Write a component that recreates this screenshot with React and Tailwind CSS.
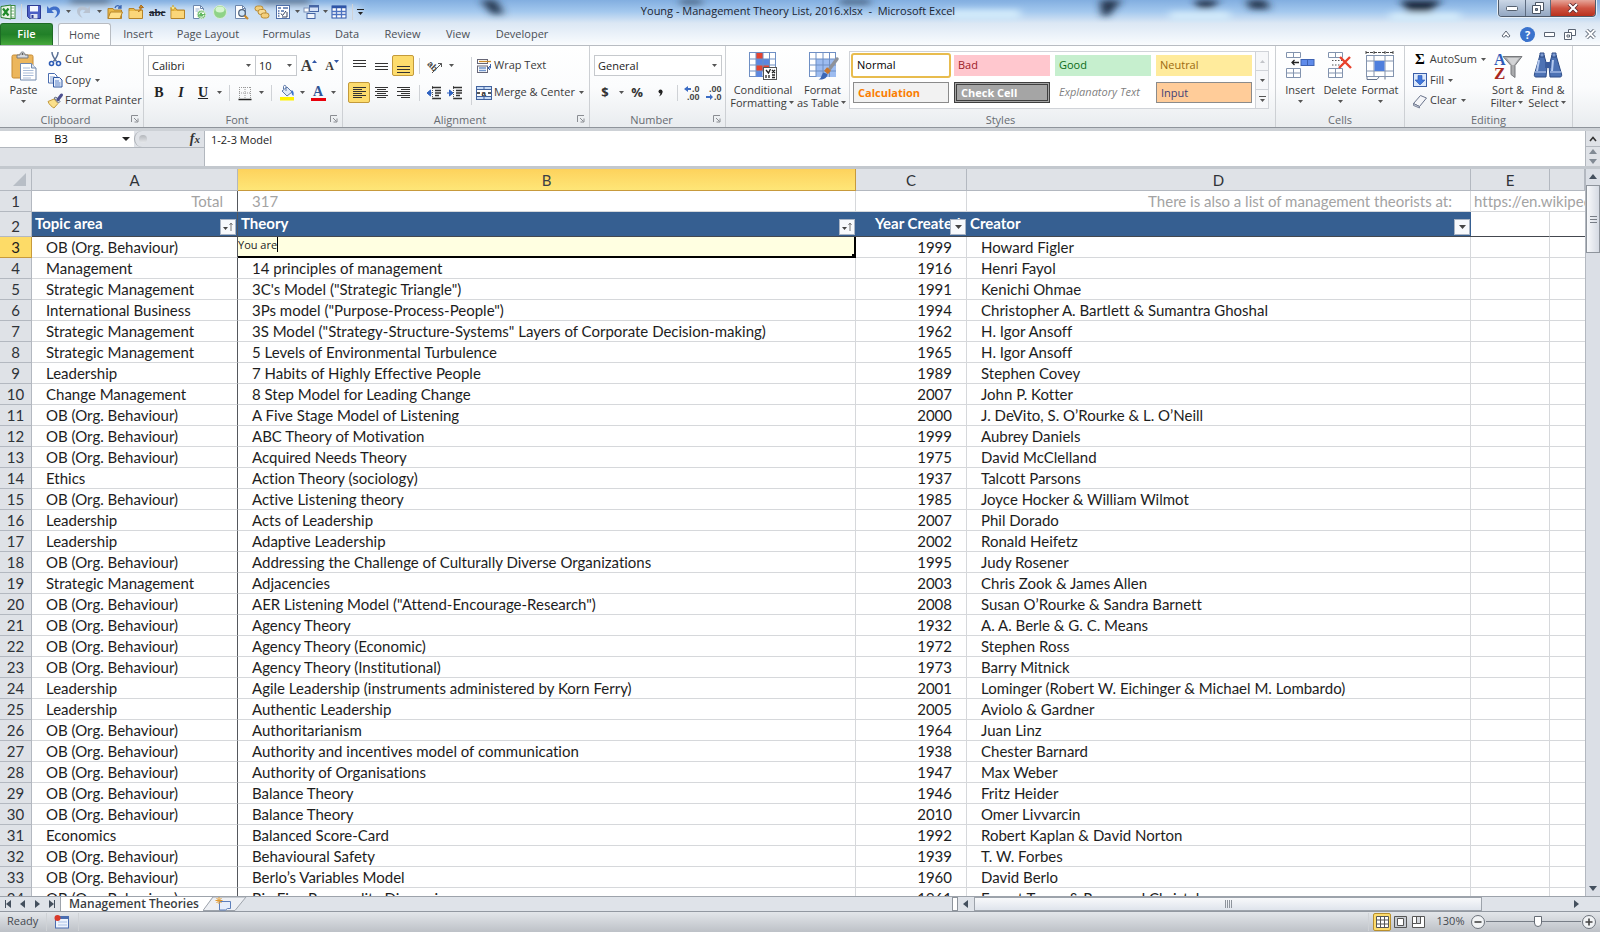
import { useState } from 'react';

const ROWS = [
  ['OB (Org. Behaviour)', '', '1999', 'Howard Figler'],
  ['Management', '14 principles of management', '1916', 'Henri Fayol'],
  ['Strategic Management', '3C\'s Model ("Strategic Triangle")', '1991', 'Kenichi Ohmae'],
  ['International Business', '3Ps model ("Purpose-Process-People")', '1994', 'Christopher A. Bartlett & Sumantra Ghoshal'],
  ['Strategic Management', '3S Model ("Strategy-Structure-Systems" Layers of Corporate Decision-making)', '1962', 'H. Igor Ansoff'],
  ['Strategic Management', '5 Levels of Environmental Turbulence', '1965', 'H. Igor Ansoff'],
  ['Leadership', '7 Habits of Highly Effective People', '1989', 'Stephen Covey'],
  ['Change Management', '8 Step Model for Leading Change', '2007', 'John P. Kotter'],
  ['OB (Org. Behaviour)', 'A Five Stage Model of Listening', '2000', 'J. DeVito, S. O’Rourke & L. O’Neill'],
  ['OB (Org. Behaviour)', 'ABC Theory of Motivation', '1999', 'Aubrey Daniels'],
  ['OB (Org. Behaviour)', 'Acquired Needs Theory', '1975', 'David McClelland'],
  ['Ethics', 'Action Theory (sociology)', '1937', 'Talcott Parsons'],
  ['OB (Org. Behaviour)', 'Active Listening theory', '1985', 'Joyce Hocker & William Wilmot'],
  ['Leadership', 'Acts of Leadership', '2007', 'Phil Dorado'],
  ['Leadership', 'Adaptive Leadership', '2002', 'Ronald Heifetz'],
  ['OB (Org. Behaviour)', 'Addressing the Challenge of Culturally Diverse Organizations', '1995', 'Judy Rosener'],
  ['Strategic Management', 'Adjacencies', '2003', 'Chris Zook & James Allen'],
  ['OB (Org. Behaviour)', 'AER Listening Model ("Attend-Encourage-Research")', '2008', 'Susan O’Rourke & Sandra Barnett'],
  ['OB (Org. Behaviour)', 'Agency Theory', '1932', 'A. A. Berle & G. C. Means'],
  ['OB (Org. Behaviour)', 'Agency Theory (Economic)', '1972', 'Stephen Ross'],
  ['OB (Org. Behaviour)', 'Agency Theory (Institutional)', '1973', 'Barry Mitnick'],
  ['Leadership', 'Agile Leadership (instruments administered by Korn Ferry)', '2001', 'Lominger (Robert W. Eichinger & Michael M. Lombardo)'],
  ['Leadership', 'Authentic Leadership', '2005', 'Aviolo & Gardner'],
  ['OB (Org. Behaviour)', 'Authoritarianism', '1964', 'Juan Linz'],
  ['OB (Org. Behaviour)', 'Authority and incentives model of communication', '1938', 'Chester Barnard'],
  ['OB (Org. Behaviour)', 'Authority of Organisations', '1947', 'Max Weber'],
  ['OB (Org. Behaviour)', 'Balance Theory', '1946', 'Fritz Heider'],
  ['OB (Org. Behaviour)', 'Balance Theory', '2010', 'Omer Livvarcin'],
  ['Economics', 'Balanced Score-Card', '1992', 'Robert Kaplan & David Norton'],
  ['OB (Org. Behaviour)', 'Behavioural Safety', '1939', 'T. W. Forbes'],
  ['OB (Org. Behaviour)', 'Berlo’s Variables Model', '1960', 'David Berlo'],
  ['OB (Org. Behaviour)', 'Big Five Personality Dimensions', '1961', 'Ernest Tupes & Raymond Christal'],
];

function Caret({ className = 'w-[10px]' }) {
  return (
    <span className={`flex shrink-0 items-center justify-center ${className}`}>
      <svg width="5" height="3" viewBox="0 0 5 3"><path d="M0 0h5L2.5 3z" fill="#555" /></svg>
    </span>
  );
}

function Sep({ className = 'h-4' }) {
  return (
    <span className="flex w-[10px] shrink-0 justify-center">
      <span className={`w-px bg-[#cfd2d6] ${className}`} />
    </span>
  );
}

function Svg({ size = 16, box = 16, children }) {
  return (
    <svg width={size} height={size} viewBox={`0 0 ${box} ${box}`} fill="none" className="shrink-0 overflow-visible">
      {children}
    </svg>
  );
}

/* ---------- quick access icons ---------- */

const ExcelIcon = () => (
  <Svg>
    <rect x="6" y="1.5" width="9" height="13" fill="#fff" stroke="#3b8a3f" />
    <path d="M10 4h4M10 7h4M10 10h4M10 13h4" stroke="#79b67a" />
    <path d="M1 2.5 11 1v14L1 13.5z" fill="#e8f4e6" stroke="#2d7d32" />
    <path d="m3 4.5 5.5 7M8.5 4.5 3 11.5" stroke="#1f8a2a" strokeWidth="2.2" />
  </Svg>
);

const SaveIcon = () => (
  <Svg>
    <path d="M1.5 1.5h13v13h-11l-2-2z" fill="#4c5fc4" stroke="#2c3a94" />
    <rect x="4" y="2" width="8" height="5.5" fill="#f4f7ff" />
    <rect x="4.5" y="10" width="7" height="4.5" fill="#dfe4f2" />
    <rect x="5.5" y="11" width="2" height="3" fill="#2c3a94" />
  </Svg>
);

const UndoIcon = ({ color = '#3f6fc9' }) => (
  <Svg>
    <path d="M1 2v7h7L5.6 6.6C8 4.8 11 5.6 11 8.5c0 2-1 3.6-2.6 5.5 3.6-1.7 5.6-4 5.6-6.8C14 2.6 8 .6 3.4 4.4z" fill={color} />
  </Svg>
);

const FolderIcon = ({ open, arrow, star }) => (
  <Svg>
    <path d="M1 4.5h5l1 1.5h7.5v8.5H1z" fill="#e9b949" stroke="#b5842a" />
    {open ? (
      <path d="M3.5 8h12l-2.5 6.5H1z" fill="#ffe08a" stroke="#b5842a" />
    ) : (
      <path d="M1.5 7h12.5v7H1.5z" fill="#fbd679" />
    )}
    {open && <path d="M8 4c1-3 4-3 5.5-.5M14 1v3h-3" stroke="#3a66b4" strokeWidth="1.3" />}
    {arrow && <path d="M10 7.5c3-.5 3.5-3 3-5M11 4l2-3 2.5 2.5z" stroke="#a86a19" fill="#e39a2e" />}
    {star && <path d="m3 1 .8 2.2L6 4l-2.200.8L3 7l-.8-2.2L0 4l2.200-.8z" fill="#fff3a0" stroke="#c99b1d" strokeWidth=".6" />}
  </Svg>
);

const PageIcon = ({ lens }) => (
  <Svg>
    <path d="M2.5 1.5h7l3 3v10h-10z" fill="#fff" stroke="#6d87ad" />
    <path d="M9.5 1.5v3h3" stroke="#6d87ad" />
    {lens ? (
      <>
        <circle cx="9" cy="9" r="3.3" fill="#cfe4f7" stroke="#4d5f78" strokeWidth="1.2" />
        <path d="m11.5 11.5 3.5 3.5" stroke="#c88a2b" strokeWidth="2.2" />
      </>
    ) : (
      <>
        <path d="M4.5 5h4M4.5 7h3" stroke="#9db2d0" />
        <circle cx="10.5" cy="10.5" r="4.3" fill="#63b862" stroke="#d9efd8" />
        <path d="M8 10.5a2.5 2.5 0 0 1 4.5-1.5M13 7.5v2h-2M13 11a2.5 2.5 0 0 1-4.5 1.2" stroke="#fff" />
      </>
    )}
  </Svg>
);

const GreenIcon = () => (
  <Svg>
    <circle cx="8" cy="8" r="6.5" fill="#8fd388" stroke="#d8ecd6" />
    <ellipse cx="8" cy="5.5" rx="4.5" ry="3" fill="#d6f5d0" />
  </Svg>
);

const ShapesIcon = () => (
  <Svg>
    <rect x="1" y="2" width="8" height="5" rx="2.5" fill="#f3cf7c" stroke="#b98b33" />
    <rect x="4" y="5.5" width="8" height="5" rx="2.5" fill="#f7dc97" stroke="#b98b33" />
    <rect x="7" y="9" width="8" height="5" rx="2.5" fill="#f3cf7c" stroke="#b98b33" />
  </Svg>
);

const FormIcon = () => (
  <Svg>
    <rect x="1.5" y="1.5" width="13" height="13" fill="#fff" stroke="#4f6fa8" />
    <path d="M3 4h3M8 4h5M3 7h1.5M6 7h3M3 12h1.5M3 9.5h1.5" stroke="#4f6fa8" strokeWidth="1.3" />
    <path d="m6 9.5 1.5 2L11 7M12 8v5H7" stroke="#333f5c" />
  </Svg>
);

const ArrangeIcon = () => (
  <Svg>
    <rect x="6.5" y="1.5" width="9" height="6" fill="#d5e2f7" stroke="#4666a5" />
    <path d="M7 2.5h8" stroke="#4666a5" strokeWidth="2" />
    <rect x="1" y="4" width="5" height="4" fill="#fff" stroke="#7a8fb5" />
    <rect x="4" y="9.5" width="8" height="5" fill="#eef3fb" stroke="#4666a5" />
  </Svg>
);

const GridIcon = () => (
  <Svg>
    <rect x="1" y="2" width="14" height="12" fill="#fff" stroke="#2f55a6" />
    <path d="M1 3h14" stroke="#2f55a6" strokeWidth="2.5" />
    <path d="M1 7.5h14M1 10.5h14M5.5 4v10M10.5 4v10" stroke="#4d72c0" strokeWidth="1.3" />
  </Svg>
);

/* ---------- ribbon icons ---------- */

const PasteIcon = () => (
  <svg width="28" height="30" viewBox="0 0 28 30" fill="none">
    <rect x="2" y="4" width="21" height="23" rx="1.5" fill="#ecb65c" stroke="#c68a33" />
    <path d="M7 7V4h3c0-4 5-4 5 0h3v3z" fill="#d6d9de" stroke="#74787f" />
    <circle cx="12.5" cy="3" r="1" fill="#555" />
    <path d="M10.5 12.5h11l4.5 4.5v12H10.5z" fill="#fff" stroke="#7089ad" />
    <path d="M21.5 12.5V17H26" fill="#dbe4f2" stroke="#7089ad" />
    <path d="M13 17h7M13 19.5h10.5M13 22h10.5M13 24.5h10.5M13 27h8" stroke="#a9bcd8" />
  </svg>
);

const CutIcon = () => (
  <Svg>
    <path d="M5 1c0 4 2 6 4.5 9.5M11 1c0 4-2 6-4.5 9.5" stroke="#5b7196" strokeWidth="1.5" />
    <circle cx="4.5" cy="12.5" r="2" stroke="#2c5bb5" strokeWidth="1.6" />
    <circle cx="11.5" cy="12.5" r="2" stroke="#2c5bb5" strokeWidth="1.6" />
  </Svg>
);

const CopyIcon = () => (
  <Svg>
    <path d="M1.5 1.5h6l2.5 2.5v7H1.5z" fill="#fff" stroke="#4a6db0" />
    <path d="M3 5h5M3 7h5M3 9h3" stroke="#7c9bd0" />
    <path d="M6.5 5.5h6L15 8v7H6.5z" fill="#eaf1fc" stroke="#2d55a0" />
    <path d="M8 9h4M8 11h5.5M8 13h5.5" stroke="#5c82c6" />
  </Svg>
);

const PainterIcon = () => (
  <Svg>
    <path d="M1 8.5 7 6l4 4.5L7 15c-2-1-5-3.5-6-6.5z" fill="#fbe08c" stroke="#c29a3f" />
    <path d="m7 5 4.5 5 1.5-1.5L9 4z" fill="#cfd6e0" stroke="#6c7688" />
    <path d="M11 6.5 14.5 2" stroke="#4b4f8e" strokeWidth="3" strokeLinecap="round" />
  </Svg>
);

const Lines = ({ rows, from = 2.5, step = 2 }) => (
  <Svg>
    {rows.map(([x, w], i) => (
      <path key={i} d={`M${x} ${from + i * step}h${w}`} stroke="#333" />
    ))}
  </Svg>
);

const BordersIcon = () => (
  <Svg>
    <path d="M2.5 2v11M8 2v11M13.5 2v11M2 2.5h12M2 8h12" stroke="#999" strokeDasharray="1 1" />
    <path d="M1.5 14.5h13" stroke="#222" strokeWidth="1.5" />
  </Svg>
);

const FillColorIcon = () => (
  <Svg>
    <path d="m3 6 5-4 5 5-5 4z" fill="#dfe9f8" stroke="#5c78a8" />
    <path d="M7 6V1.5c0-1.5-2.5-1.5-2.5 0V4" stroke="#5c78a8" />
    <path d="M12.5 5c2 .5 2.5 3 2 6-1.5-1-2-2-2-4z" fill="#3b73cf" />
    <rect x="1" y="12" width="14" height="3.5" fill="#fff200" />
  </Svg>
);

const OrientIcon = () => (
  <Svg>
    <text x="0" y="10" transform="rotate(45 4 8)" fontSize="9" fontWeight="700" fontFamily="Liberation Sans, sans-serif" fill="#444">ab</text>
    <path d="M5 15 14.5 5.500M14.500 5.500h-3.500M14.500 5.500v3.500" stroke="#555" />
  </Svg>
);

const IndentIcon = ({ out }) => (
  <Svg>
    <path d="M6 2.5h9M9 5.5h6M9 8h6M9 10.5h4M6 13.5h9" stroke="#333" strokeWidth="1.3" />
    <path d="M6.5 1v14" stroke="#555" strokeDasharray="1 1" />
    <path d={out ? 'M6 8H2M4.5 5 1 8l3.5 3z' : 'M0 8h4M2.5 5 6 8l-3.5 3z'} stroke="#2f62c0" fill="#2f62c0" />
  </Svg>
);

const WrapIcon = () => (
  <Svg>
    <rect x="1.5" y="1.5" width="10" height="4" fill="#fff" stroke="#667" />
    <path d="M3 3.5h12" stroke="#c98a2b" strokeWidth="1.3" />
    <rect x="1.5" y="8" width="10" height="6.5" fill="#fff" stroke="#667" />
    <path d="M3 10h7M3 12.5h7" stroke="#6f95cc" strokeWidth="1.4" />
    <path d="M14.5 6v4H13M14 8l-2 2 2 2" stroke="#3862ac" />
  </Svg>
);

const MergeIcon = () => (
  <Svg>
    <rect x=".5" y="1.5" width="15" height="13" fill="#c9dcf6" stroke="#42639e" />
    <path d="M0 4.5h16M0 11.5h16M8 1v3.5M8 11.5V15" stroke="#42639e" />
    <rect x="1" y="5" width="14" height="6" fill="#fff" />
    <text x="5.5" y="10.5" fontSize="8" fontWeight="700" fontFamily="Liberation Sans, sans-serif" fill="#222">a</text>
    <path d="M1 8h3M12 8h3" stroke="#222" strokeWidth="1.5" />
  </Svg>
);

const DecimalIcon = ({ more }) => (
  <svg width="18" height="16" viewBox="0 0 18 16" fontSize="9" fontWeight="700" fontFamily="Liberation Sans, sans-serif" className="overflow-visible">
    <text x={more ? 8 : 3} y="7" fill="#444">{more ? '.0' : '.00'}</text>
    <text x={more ? 3 : 8} y="15" fill="#444">{more ? '.00' : '.0'}</text>
    {more ? <path d="M0 4 4 1v2h3v2H4v2z" fill="#3b6cc4" /> : <path d="M7 12 4 9v2H0v2h4v2z" fill="#3b6cc4" />}
  </svg>
);

const CondFormatIcon = () => (
  <Svg size={30} box={30}>
    <rect x="1.5" y="1.5" width="26" height="24" fill="#fff" stroke="#6f8fc4" />
    <path d="M8 2h7v6H8zM8 14h13v6H8z" fill="#e5432f" />
    <path d="M8 8h13v6H8z" fill="#5b86e0" />
    <path d="M8 20h6v6H8z" fill="#5b86e0" />
    <path d="M1 8h27M1 14h27M1 20h27M8 1v25M15 1v25M21.5 1v25" stroke="#6f8fc4" />
    <rect x="15.5" y="16.5" width="13" height="12" fill="#fff" stroke="#555" />
    <path d="m18 19 2.5 3 2-4M18 24v3M21 24v3M24 19l3 3M27 19l-3 3M24 24h3M24 26.5h3" stroke="#222" strokeWidth="1.3" />
  </Svg>
);

const FormatTableIcon = () => (
  <Svg size={30} box={30}>
    <rect x="1.5" y="1.5" width="26" height="24" fill="#fff" stroke="#6f8fc4" />
    <path d="M8 8h20v18H8z" fill="#9dbcf0" />
    <path d="M1 8h27M1 14h27M1 20h27M8 1v25M15 1v25M21.5 1v25" stroke="#6f8fc4" />
    <path d="M29 8 20 20" stroke="#8f9299" strokeWidth="3.5" strokeLinecap="round" />
    <path d="m21 18-3 3.5" stroke="#c9762c" strokeWidth="5" />
    <path d="M19.5 23c0 4-4 6-9 5.5 3-1 2.5-4 5-7z" fill="#3c67b5" />
  </Svg>
);

const InsertIcon = () => (
  <Svg size={30} box={30}>
    <path d="M1.5 1.5h14v5h-14zM8.5 1.5v5M1.5 17.5h14v9h-14zM8.5 17.5v9M1.5 22h14" fill="#fff" stroke="#8293ae" />
    <rect x="16" y="8.5" width="13" height="6" fill="#5f8bea" stroke="#3e62b2" />
    <path d="M22.5 8.5v6" stroke="#3e62b2" />
    <path d="M14 11.5H7M9.5 9 7 11.5 9.5 14" stroke="#222" strokeWidth="1.3" />
  </Svg>
);

const DeleteIcon = () => (
  <Svg size={30} box={30}>
    <path d="M3.5 1.5h14v5h-14zM10.5 1.5v5M3.5 17.5h14v9h-14zM10.5 17.5v9M3.5 22h14" fill="#fff" stroke="#8293ae" />
    <path d="M7 9.5h10M7 14h10" stroke="#555" strokeDasharray="1.5 1.5" />
    <path d="m15 6 11 11M25 6 14 17" stroke="#e8412c" strokeWidth="2.4" />
  </Svg>
);

const FormatIcon = () => (
  <Svg size={30} box={30}>
    <path d="M1 1.5h27M1 0v3M9 0v3M20 0v3M28 0v3" stroke="#444" strokeDasharray="3 1" />
    <rect x="1.5" y="4.5" width="27" height="21" fill="#fff" stroke="#8293ae" />
    <path d="M1 10h28M1 20h28M9 4v22M20 4v22" stroke="#8293ae" />
    <rect x="9.5" y="10" width="10" height="10" fill="#4f7fdd" />
    <path d="M2 26v2.5h10l2-2.5M20 26v2.5" stroke="#66758f" />
  </Svg>
);

const FillIcon = () => (
  <Svg>
    <rect x="1.5" y="1.5" width="13" height="13" fill="#dbe8fb" stroke="#3a5ea8" />
    <path d="M6 3.5h4V8h3l-5 5-5-5h3z" fill="#3f76dc" stroke="#2b55ad" strokeWidth=".6" />
  </Svg>
);

const ClearIcon = () => (
  <Svg>
    <path d="m1.5 10.5 7-8 6 2.5-7 8.5z" fill="#f4f5f8" stroke="#68728a" />
    <path d="m1.5 10.5 6 3v1.5l-6-2.5z" fill="#c5cbd8" stroke="#68728a" strokeWidth=".8" />
  </Svg>
);

const SortIcon = () => (
  <Svg size={30} box={30}>
    <path d="M10 5.5h19l-7 9v12l-4-3v-9z" fill="#aaabad" stroke="#77797c" />
    <path d="M14 7h12l-5 7h-2z" fill="#d3d4d6" />
    <text x="1" y="14" fontSize="16" fontWeight="700" fontFamily="Liberation Serif, serif" fill="#2f5cb8">A</text>
    <text x="1" y="28" fontSize="17" fontWeight="700" fontFamily="Liberation Serif, serif" fill="#a8281f">Z</text>
  </Svg>
);

const FindIcon = () => (
  <Svg size={30} box={30}>
    <path d="M7 4h4l3 11-1 11H3c-1.5 0-2-1-1.5-3zM23 4h-4l-3 11 1 11h10c1.5 0 2-1 1.5-3z" fill="#4d72b4" stroke="#2c4b86" />
    <path d="M12 11h6v6h-6z" fill="#3a5c9d" />
    <path d="M7 2h4v4H7zM19 2h4v4h-4z" fill="#7d9bd2" stroke="#2c4b86" />
    <path d="M6 9 4 20M20 9l-1 11" stroke="#b3c8ee" strokeWidth="2" />
    <path d="M2 21h11M17 21h11" stroke="#9fb7e4" strokeWidth="1.5" />
  </Svg>
);

/* ---------- ribbon pieces ---------- */

function Group({ label, width, launcher, children }) {
  return (
    <section aria-label={label} className={`flex shrink-0 flex-col border-r border-[#cdd0d4] ${width}`}>
      <div className="flex h-16 flex-1 pt-[3px]">{children}</div>
      <div className="flex h-4 items-center text-[11px] leading-none text-[#676b71]">
        <span className="flex-1 text-center">{label}</span>
        {launcher && (
          <button aria-label={`${label} settings`} className="mr-1 shrink-0">
            <svg width="8" height="8" viewBox="0 0 8 8" fill="none">
              <path d="M.5 7V.5H7M3 3l3.5 3.5M7 3.5V7H3.5" stroke="#8a8d92" />
            </svg>
          </button>
        )}
      </div>
    </section>
  );
}

function Tool({ label, active, width = 'w-[22px]', children }) {
  return (
    <button
      aria-label={label}
      className={`flex h-[21px] shrink-0 items-center justify-center rounded-[2px] border ${width} ${
        active ? 'border-[#c39a3b] bg-[#fddc6d]' : 'border-transparent'
      }`}
    >
      {children}
    </button>
  );
}

function BigButton({ icon, lines, caret, width }) {
  return (
    <button className={`flex shrink-0 flex-col items-center text-[11px] leading-[13px] ${width}`}>
      <span className="flex h-[34px] items-center">{icon}</span>
      {lines.map((line, i) => (
        <span key={line} className="flex items-center whitespace-nowrap">
          {line}
          {!caret && i === lines.length - 1 && <Caret className="w-[9px]" />}
        </span>
      ))}
      {caret && <Caret className="h-[11px] w-[9px]" />}
    </button>
  );
}

function SmallButton({ icon, label, caret }) {
  return (
    <button className="flex h-[21px] items-center gap-[2px] whitespace-nowrap">
      {icon}
      <span>{label}</span>
      {caret && <Caret className="w-[9px]" />}
    </button>
  );
}

function Combo({ label, options, width }) {
  return (
    <label className={`flex h-[21px] items-center border border-[#c6c9cd] bg-white ${width}`}>
      <span className="sr-only">{label}</span>
      <select className="h-full min-w-0 flex-1 appearance-none bg-transparent pl-[3px] leading-[19px] text-[#222] outline-none">
        {options.map((o) => <option key={o}>{o}</option>)}
      </select>
      <Caret className="w-[13px]" />
    </label>
  );
}

function StyleCell({ name, className }) {
  return <button className={`h-[21px] px-1 text-left whitespace-nowrap ${className}`}>{name}</button>;
}

function Ribbon() {
  return (
    <div className="flex h-[83px] shrink-0 overflow-hidden border-t border-b border-t-[#b8bcc2] border-b-[#8f949b] bg-linear-to-b from-white via-[#fbfcfd] to-[#e9ecef] text-[11px] text-[#3b3b3b]">
      <Group label="Clipboard" width="w-[144px]" launcher>
        <BigButton icon={<PasteIcon />} lines={['Paste']} caret width="w-[47px]" />
        <div className="flex flex-col">
          <SmallButton icon={<CutIcon />} label="Cut" />
          <SmallButton icon={<CopyIcon />} label="Copy" caret />
          <SmallButton icon={<PainterIcon />} label="Format Painter" />
        </div>
      </Group>

      <Group label="Font" width="w-[199px]" launcher>
        <div className="flex flex-col gap-[6px] pt-[6px] pl-1">
          <div className="flex items-center">
            <Combo label="Font name" options={['Calibri', 'Arial']} width="w-[108px]" />
            <Combo label="Font size" options={['10', '11', '12']} width="-ml-px w-[42px]" />
            <Tool label="Increase font size" width="w-[24px]">
              <span className="font-[Liberation_Serif,serif] text-[16px] font-bold">A</span>
              <svg width="5" height="12" viewBox="0 0 5 12"><path d="M0 3h5L2.5 0z" fill="#2f55a6" /></svg>
            </Tool>
            <Tool label="Decrease font size">
              <span className="font-[Liberation_Serif,serif] text-[12px] font-bold">A</span>
              <svg width="5" height="12" viewBox="0 0 5 12"><path d="M0 0h5L2.5 3z" fill="#2f55a6" /></svg>
            </Tool>
          </div>
          <div className="flex items-center font-[Liberation_Serif,serif] text-[14px] font-bold text-[#222]">
            <Tool label="Bold">B</Tool>
            <Tool label="Italic"><i>I</i></Tool>
            <Tool label="Underline"><u>U</u></Tool>
            <Caret />
            <Sep />
            <Tool label="Borders"><BordersIcon /></Tool>
            <Caret />
            <Sep />
            <Tool label="Fill colour"><FillColorIcon /></Tool>
            <Caret className="w-[9px]" />
            <Tool label="Font colour">
              <span className="flex flex-col items-center">
                <span className="text-[14px] leading-[13px] text-[#2f5597]">A</span>
                <span className="h-[3px] w-[15px] bg-[#e8000b]" />
              </span>
            </Tool>
            <Caret className="w-[9px]" />
          </div>
        </div>
      </Group>

      <Group label="Alignment" width="w-[247px]" launcher>
        <div className="flex flex-col gap-[6px] pt-[6px] pl-[5px]">
          <div className="flex items-center">
            <Tool label="Top align"><Lines from={2.5} step={3} rows={[[2, 13], [2, 13], [2, 13]]} /></Tool>
            <Tool label="Middle align"><Lines from={5.5} step={3} rows={[[2, 13], [2, 13], [2, 13]]} /></Tool>
            <Tool label="Bottom align" active><Lines from={8.5} step={3} rows={[[2, 13], [2, 13], [2, 13]]} /></Tool>
            <Sep />
            <Tool label="Orientation"><OrientIcon /></Tool>
            <Caret />
          </div>
          <div className="flex items-center">
            <Tool label="Align left" active><Lines rows={[[2, 13], [2, 9], [2, 13], [2, 9], [2, 13], [2, 9]]} /></Tool>
            <Tool label="Center"><Lines rows={[[2, 13], [4, 9], [2, 13], [4, 9], [2, 13], [4, 9]]} /></Tool>
            <Tool label="Align right"><Lines rows={[[2, 13], [6, 9], [2, 13], [6, 9], [2, 13], [6, 9]]} /></Tool>
            <Sep />
            <Tool label="Decrease indent" width="w-5"><IndentIcon out /></Tool>
            <Tool label="Increase indent"><IndentIcon /></Tool>
          </div>
        </div>
        <Sep className="mt-2 h-12" />
        <div className="flex flex-col gap-[6px] pt-[6px]">
          <SmallButton icon={<WrapIcon />} label="Wrap Text" />
          <SmallButton icon={<MergeIcon />} label="Merge & Center" caret />
        </div>
      </Group>

      <Group label="Number" width="w-[136px]" launcher>
        <div className="flex flex-col gap-[6px] pt-[6px] pl-1">
          <Combo label="Number format" options={['General', 'Number', 'Percentage']} width="w-[128px]" />
          <div className="flex items-center text-[13px] font-bold text-[#333]">
            <Tool label="Accounting format">$</Tool>
            <Caret />
            <Tool label="Percent style">%</Tool>
            <Tool label="Comma style" width="w-[24px]">
              <svg width="5" height="8" viewBox="0 0 5 8"><circle cx="2.5" cy="2.5" r="2" fill="#222" /><path d="M4.500 2.500c0 2-1 4-3.500 5 1-1.500 1.500-2.500 1.500-4z" fill="#222" /></svg>
            </Tool>
            <Sep />
            <Tool label="Increase decimal"><DecimalIcon more /></Tool>
            <Tool label="Decrease decimal"><DecimalIcon /></Tool>
          </div>
        </div>
      </Group>

      <Group label="Styles" width="w-[550px]">
        <BigButton icon={<CondFormatIcon />} lines={['Conditional', 'Formatting']} width="w-[74px]" />
        <BigButton icon={<FormatTableIcon />} lines={['Format', 'as Table']} width="w-[45px]" />
        <div className="mt-[2px] ml-1 flex h-[58px] border border-[#d0d3d8] bg-white">
          <div className="grid grid-cols-[96px_96px_96px_96px] content-start gap-x-[5px] gap-y-[6px] px-[3px] pt-[3px]">
            <StyleCell name="Normal" className="rounded-[1px] bg-white text-black outline-2 outline-[#e8bc4e]" />
            <StyleCell name="Bad" className="bg-[#ffc7ce] text-[#9c1c28]" />
            <StyleCell name="Good" className="bg-[#c6efce] text-[#0b6b16]" />
            <StyleCell name="Neutral" className="bg-[#ffeb9c] text-[#9c6a10]" />
            <StyleCell name="Calculation" className="border border-[#8b8b8b] bg-[#f2f2f2] leading-[18px] font-bold text-[#fa7d00]" />
            <StyleCell name="Check Cell" className="border-[3px] border-double border-[#3f3f3f] bg-[#a5a5a5] leading-[15px] font-bold text-white" />
            <StyleCell name="Explanatory Text" className="text-[#7f7f7f] italic" />
            <StyleCell name="Input" className="border border-[#8b8b8b] bg-[#ffcc99] leading-[18px] text-[#3f3f76]" />
          </div>
          <div className="flex w-[13px] flex-col divide-y divide-[#d0d3d8] border-l border-[#d0d3d8] bg-[#f6f7f9]">
            <button aria-label="Previous styles" className="flex flex-1 items-center justify-center">
              <svg width="5" height="3" viewBox="0 0 5 3"><path d="M0 3h5L2.5 0z" fill="#c3c5c9" /></svg>
            </button>
            <button aria-label="Next styles" className="flex flex-1 items-center justify-center"><Caret /></button>
            <button aria-label="More styles" className="flex flex-1 items-center justify-center">
              <svg width="7" height="6" viewBox="0 0 7 6"><path d="M0 .5h7" stroke="#555" /><path d="M1 3h5L3.5 6z" fill="#555" /></svg>
            </button>
          </div>
        </div>
      </Group>

      <Group label="Cells" width="w-[129px]">
        <div className="flex pl-1">
          <BigButton icon={<InsertIcon />} lines={['Insert']} caret width="w-10" />
          <BigButton icon={<DeleteIcon />} lines={['Delete']} caret width="w-10" />
          <BigButton icon={<FormatIcon />} lines={['Format']} caret width="w-10" />
        </div>
      </Group>

      <Group label="Editing" width="w-[168px]">
        <div className="flex w-[83px] flex-col pl-[7px]">
          <SmallButton
            icon={<span className="w-4 text-center font-[Liberation_Serif,serif] text-[15px] leading-none font-bold text-black">Σ</span>}
            label="AutoSum"
            caret
          />
          <SmallButton icon={<FillIcon />} label="Fill" caret />
          <SmallButton icon={<ClearIcon />} label="Clear" caret />
        </div>
        <BigButton icon={<SortIcon />} lines={['Sort &', 'Filter']} width="w-[40px]" />
        <BigButton icon={<FindIcon />} lines={['Find &', 'Select']} width="w-[40px]" />
      </Group>
    </div>
  );
}

/* ---------- window chrome ---------- */

function TitleBar() {
  return (
    <header className="relative flex h-[23px] shrink-0 overflow-hidden bg-linear-to-b from-[#82aee0] via-[#a3c8ee] to-[#dbe7f4] text-[#1c2430]">
      <svg className="absolute inset-0 h-full w-full" viewBox="0 0 1600 23" preserveAspectRatio="none" aria-hidden="true">
        <defs><filter id="glass"><feGaussianBlur stdDeviation="4 3" /></filter></defs>
        <g filter="url(#glass)">
          <rect x="0" y="6" width="360" height="14" fill="#d5e5f6" opacity=".8" />
          <path d="M480 0h16l8 14h-12z" fill="#26384f" />
          <path d="M1100 0h22l-14 16h-6z" fill="#22334a" />
          <path d="M1194 0h26l-8 8h-14zM1246 0h20l4 9h-20z" fill="#22334a" />
          <path d="M1400 0h42l-12 12h-22z" fill="#1d2c40" />
          <path d="M680 0h22v4h-22zM840 0h30v4h-30zM70 0h40v4H70zM260 0h50v4h-50z" fill="#33475f" />
          <path d="M1170 12h60v8h-60zM1390 13h70v8h-70zM950 10h70v9h-70z" fill="#d4ecfb" />
        </g>
      </svg>
      <div className="relative flex flex-1 items-center">
        <ExcelIcon />
        <Sep className="h-4 bg-[#7489a3]" />
        <div className="flex items-center">
          <button aria-label="Save" className="w-5"><SaveIcon /></button>
          <button aria-label="Undo" className="w-4"><UndoIcon /></button>
          <Caret className="w-[13px]" />
          <button aria-label="Redo" className="w-4 -scale-x-100"><UndoIcon color="#b9c3d1" /></button>
          <Caret className="w-4" />
        </div>
        <div className="flex items-center gap-[5px]">
          <button aria-label="Open"><FolderIcon open /></button>
          <button aria-label="Close folder"><FolderIcon arrow /></button>
          <button aria-label="Spelling" className="w-4 font-[Liberation_Serif,serif] text-[11px] leading-4 font-bold line-through">abc</button>
          <button aria-label="New folder"><FolderIcon star /></button>
          <button aria-label="Refresh page"><PageIcon /></button>
          <button aria-label="Status"><GreenIcon /></button>
          <button aria-label="Print preview"><PageIcon lens /></button>
          <button aria-label="Shapes"><ShapesIcon /></button>
          <button aria-label="Form"><FormIcon /></button>
        </div>
        <Caret className="w-3" />
        <button aria-label="Arrange"><ArrangeIcon /></button>
        <Caret className="w-3" />
        <button aria-label="Table"><GridIcon /></button>
        <Sep className="h-4 bg-[#7489a3]" />
        <button aria-label="Customize toolbar">
          <svg width="7" height="6" viewBox="0 0 7 6"><path d="M0 .5h7" stroke="#222" /><path d="M1 3h5L3.5 6z" fill="#222" /></svg>
        </button>
      </div>
      <h1 className="relative text-[11px] leading-[22px] whitespace-pre">Young - Management Theory List, 2016.xlsx  -  Microsoft Excel</h1>
      <div className="relative flex flex-1 justify-end pr-1">
        <div className="flex h-[17px] overflow-hidden rounded-b-[4px] border border-t-0 border-[#4f5b6b] shadow-[0_0_0_1px_#e8f0f8]">
          <button aria-label="Minimize" className="flex w-[27px] items-center justify-center border-r border-[#5d6b7f] bg-linear-to-b from-[#cbd7e6] to-[#93a7c2]">
            <svg width="12" height="5" viewBox="0 0 12 5"><rect x=".5" y=".5" width="11" height="4" rx="1" fill="#fff" stroke="#55606f" /></svg>
          </button>
          <button aria-label="Restore" className="flex w-[25px] items-center justify-center border-r border-[#5d6b7f] bg-linear-to-b from-[#cbd7e6] to-[#93a7c2]">
            <svg width="12" height="12" viewBox="0 0 12 12" fill="#fff" stroke="#4b5665"><path d="M3.5.5h8v8h-8z" /><path d="M.5 3.5h8v8h-8z" /><path d="M3.5 6.5h2v2h-2z" fill="#8596ad" /></svg>
          </button>
          <button aria-label="Close" className="flex w-[44px] items-center justify-center bg-linear-to-b from-[#e5a59a] via-[#cf5443] to-[#b8301c]">
            <svg width="12" height="10" viewBox="0 0 12 10"><path d="m2 1 8 8M10 1 2 9" stroke="#54242a" strokeWidth="3.8" /><path d="m2 1 8 8M10 1 2 9" stroke="#fff" strokeWidth="2.2" /></svg>
          </button>
        </div>
      </div>
    </header>
  );
}

const TABS = [
  ['Home', 'w-[53px]'],
  ['Insert', 'w-[54px]'],
  ['Page Layout', 'w-[86px]'],
  ['Formulas', 'w-[71px]'],
  ['Data', 'w-[50px]'],
  ['Review', 'w-[61px]'],
  ['View', 'w-[50px]'],
  ['Developer', 'w-[78px]'],
];

function TabStrip({ tab, onTab }) {
  return (
    <nav className="flex h-[22px] shrink-0 items-stretch bg-linear-to-b from-[#dbe7f4] to-[#fafcfe] text-[11px] text-[#4b4f55]">
      <button className="w-[53px] rounded-t-[3px] border border-b-0 border-[#1d6b25] bg-linear-to-b from-[#2f8a36] via-[#218028] to-[#46a83c] font-semibold text-white">File</button>
      <div className="ml-[5px] flex">
        {TABS.map(([name, width]) => (
          <button
            key={name}
            onClick={() => onTab(name)}
            className={`${width} ${tab === name ? '-mb-px rounded-t-[3px] border border-b-0 border-[#b8bcc2] bg-white' : ''}`}
          >
            {name}
          </button>
        ))}
      </div>
      <div className="ml-auto flex items-center gap-[9px] pr-1">
        <button aria-label="Collapse ribbon">
          <svg width="10" height="8" viewBox="0 0 10 8" fill="#fff" stroke="#5a6473"><path d="m1 6 4-5 4 5-1.5 1h-1L5 5 3.5 7h-1z" /></svg>
        </button>
        <button aria-label="Help" className="h-[15px] w-[15px] rounded-full bg-[#3b73cd] text-[11px] leading-[15px] font-bold text-white">?</button>
        <button aria-label="Minimize workbook">
          <svg width="11" height="5" viewBox="0 0 11 5" fill="#fff" stroke="#5a6473"><path d="M.5.5h10v4H.5z" /></svg>
        </button>
        <button aria-label="Restore workbook">
          <svg width="12" height="11" viewBox="0 0 12 11" fill="#fff" stroke="#5a6473"><path d="M4.5.5h7v6h-7z" /><path d="M.5 3.5h7v7h-7z" /><path d="M3 6h2.5v2H3z" /></svg>
        </button>
        <button aria-label="Close workbook">
          <svg width="11" height="10" viewBox="0 0 11 10"><path d="m1.5 1 8 8M9.5 1l-8 8" stroke="#5a6473" strokeWidth="3.6" /><path d="m1.5 1 8 8M9.5 1l-8 8" stroke="#fff" strokeWidth="1.8" /></svg>
        </button>
      </div>
    </nav>
  );
}

function ArrowIcon({ dir = 'up', bar }) {
  const paths = { up: 'M0 6h8L4 1z', down: 'M0 2h8L4 7z', left: 'M6 0v8L1 4z', right: 'M2 0v8l5-4z' };
  return (
    <svg width="8" height="8" viewBox="0 0 8 8" className="shrink-0">
      <path d={paths[dir]} fill="#44505e" />
      {bar && <path d={dir === 'left' ? 'M.5 0v8' : 'M7.5 0v8'} stroke="#44505e" />}
    </svg>
  );
}

function FormulaBar() {
  return (
    <div className="flex h-[41px] shrink-0 border-t-[3px] border-b-[3px] border-t-[#cdd1d6] border-b-[#c3c8ce] bg-[#dfe2e7]">
      <div className="flex h-[17px] w-[204px] shrink-0 items-center border-b border-[#b2b7be]">
        <label className="flex h-4 w-[134px] items-center bg-white">
          <span className="sr-only">Name box</span>
          <input defaultValue="B3" className="w-[122px] bg-transparent text-center text-[11px] outline-none" />
          <svg width="8" height="4" viewBox="0 0 8 4"><path d="M0 0h8L4 4z" fill="#222" /></svg>
        </label>
        <span className="h-4 flex-1 rounded-l-full border-l border-[#a9adb3]">
          <span className="mt-1 ml-1 block h-2 w-2 rounded-full bg-linear-to-b from-[#b4b7bc] to-[#e6e8eb]" />
        </span>
        <button className="pr-1 font-[Liberation_Serif,serif] text-[14px] leading-none font-bold text-[#333] italic">
          f<span className="text-[11px]">x</span>
        </button>
      </div>
      <textarea
        aria-label="Formula"
        rows={1}
        defaultValue="1-2-3 Model"
        className="flex-1 resize-none overflow-hidden border-l border-[#b2b7be] bg-white pt-px pl-[6px] text-[11px] leading-4 text-[#222] outline-none"
      />
      <div className="flex w-[15px] flex-col items-center border-l border-[#b2b7be] bg-[#dfe2e7]">
        <button aria-label="Expand formula bar" className="flex h-4 w-full items-center justify-center border-b border-[#b2b7be]">
          <svg width="8" height="6" viewBox="0 0 8 6" fill="none"><path d="m1 5 3-3.5L7 5" stroke="#333" strokeWidth="1.6" /></svg>
        </button>
        <button aria-label="Scroll formula up" className="flex h-[9px] items-center opacity-60"><ArrowIcon /></button>
        <button aria-label="Scroll formula down" className="flex h-[9px] items-center opacity-60"><ArrowIcon dir="down" /></button>
      </div>
    </div>
  );
}

function FilterButton({ label, sorted }) {
  return (
    <button aria-label={label} className="absolute right-px bottom-px flex h-4 w-4 items-center justify-center border border-[#a9b4c4] bg-[#f7f9fc]">
      {sorted ? (
        <svg width="11" height="10" viewBox="0 0 11 10"><path d="M0 5h5L2.5 8z" fill="#444" /><path d="M8 9V1M6.5 3 8 1l1.5 2" stroke="#777" fill="none" /></svg>
      ) : (
        <svg width="7" height="4" viewBox="0 0 7 4"><path d="M0 0h7L3.5 4z" fill="#444" /></svg>
      )}
    </button>
  );
}

const LINE = 'border-r border-b border-[#d6d8db]';
const ROW_HEAD = 'border-r border-b border-[#b3b8c0] bg-[#dfe2e7] p-0 text-center font-normal text-[#2f3338]';
const HEAD = 'relative p-0 pb-[2px] text-left font-bold whitespace-nowrap text-white bg-[#365f91] border-b border-[#44484f]';

function Sheet() {
  return (
    <div className="min-w-0 flex-1 overflow-hidden bg-white">
      <table className="w-full table-fixed border-separate border-spacing-0 font-[Lato,sans-serif] text-[15px] leading-5 text-[#1d1d1d] [font-variant-ligatures:none]">
        <colgroup>
          <col className="w-8" />
          <col className="w-[206px]" />
          <col className="w-[618px]" />
          <col className="w-[111px]" />
          <col className="w-[504px]" />
          <col className="w-[79px]" />
          <col />
        </colgroup>
        <thead>
          <tr className="h-[22px] text-[#3b3f45]">
            <th className={ROW_HEAD}>
              <svg width="14" height="14" viewBox="0 0 14 14" className="ml-auto mr-1"><path d="M13 0v13H0z" fill="#b8bec6" /></svg>
            </th>
            <th className={ROW_HEAD}>A</th>
            <th className="border-r border-b border-[#c79a3c] bg-linear-to-b from-[#fdd25c] to-[#fee677] p-0 font-normal">B</th>
            <th className={ROW_HEAD}>C</th>
            <th className={ROW_HEAD}>D</th>
            <th className={ROW_HEAD}>E</th>
            <th className={ROW_HEAD} />
          </tr>
        </thead>
        <tbody>
          <tr className="h-[21px] whitespace-nowrap text-[#a3a3a3]">
            <th className={ROW_HEAD}>1</th>
            <td className="border-r border-b border-r-[#55585d] border-b-[#d6d8db] p-0 pr-[14px] text-right">Total</td>
            <td className={`${LINE} p-0 pl-[14px]`}>317</td>
            <td className={LINE} />
            <td className={`${LINE} p-0 pr-[18px] text-right`}>There is also a list of management theorists at:</td>
            <td className="border-b border-[#d6d8db] p-0 pl-[3px]">
              <a href="https://en.wikipedia.org/wiki/List_of_management_theorists" className="block w-[112px] overflow-hidden text-clip">https://en.wikipedia.org</a>
            </td>
            <td className="border-b border-[#d6d8db]" />
          </tr>
          <tr className="h-[25px]">
            <th className={`${ROW_HEAD} pt-1`}>2</th>
            <th className={`${HEAD} border-r border-r-[#55585d] pl-[3px]`}>Topic area<FilterButton label="Filter topic area" sorted /></th>
            <th className={`${HEAD} pl-[3px]`}>Theory<FilterButton label="Filter theory" sorted /></th>
            <th className={`${HEAD} pl-[19px]`}>Year Created<FilterButton label="Filter year created" /></th>
            <th className={`${HEAD} pl-[3px]`}>Creator<FilterButton label="Filter creator" /></th>
            <td className="border-r border-b border-r-[#d6d8db] border-b-[#44484f]" />
            <td className="border-b border-[#44484f]" />
          </tr>
          {ROWS.map(([topic, theory, year, creator], i) => (
            <tr key={i} className="h-[21px] whitespace-nowrap">
              <th className={i === 0 ? 'border-r border-b border-[#c79a3c] bg-[#fddb67] p-0 font-normal' : ROW_HEAD}>{i + 3}</th>
              <td className="border-r border-b border-r-[#55585d] border-b-[#d6d8db] p-0 pl-[14px]">{topic}</td>
              {i === 0 ? (
                <td className="relative border-r-2 border-b-2 border-black bg-[#ffffe1] p-0">
                  <div className="flex h-[19px] items-start">
                    <input aria-label="Cell B3" defaultValue="You are" className="field-sizing-content bg-transparent font-[Open_Sans,sans-serif] text-[11px] leading-4 outline-none" />
                    <span className="h-[15px] w-px bg-black" />
                  </div>
                  <span className="absolute -right-[2px] -bottom-[2px] h-1 w-1 bg-black" />
                </td>
              ) : (
                <td className={`${LINE} p-0 pl-[14px]`}>{theory}</td>
              )}
              <td className={`${LINE} p-0 pr-[14px] text-right`}>{year}</td>
              <td className={`${LINE} p-0 pl-[14px]`}>{creator}</td>
              <td className={LINE} />
              <td className="border-b border-[#d6d8db]" />
            </tr>
          ))}
        </tbody>
      </table>
    </div>
  );
}

function BottomBar() {
  return (
    <div className="relative flex h-[15px] shrink-0 items-stretch border-t border-[#9da3ab] bg-[#dfe3e9]">
      <div className="flex w-[60px] items-center justify-between px-[5px]">
        <button aria-label="First sheet"><ArrowIcon dir="left" bar /></button>
        <button aria-label="Previous sheet"><ArrowIcon dir="left" /></button>
        <button aria-label="Next sheet"><ArrowIcon dir="right" /></button>
        <button aria-label="Last sheet"><ArrowIcon dir="right" bar /></button>
      </div>
      <button className="border-l border-[#9da3ab] bg-white pr-1 pl-2 text-[12px] leading-[14px] font-semibold whitespace-nowrap text-[#3a3d42]">Management Theories</button>
      <button aria-label="New sheet" className="shrink-0">
        <svg width="46" height="14" viewBox="0 0 46 14" fill="none">
          <path d="M0 0h9L0 14z" fill="#fff" />
          <path d="M0 13.5h32L43 0H10z" fill="#eef0f4" stroke="#9da3ab" />
          <path d="M16.5 4.5h11v7h-3l-2 1.5h-6z" fill="#e6eefb" stroke="#5d7fbb" />
          <path d="M16 0v7M12.5 3.5h7M13.5 1l5 5M18.5 1l-5 5" stroke="#e39a2e" />
        </svg>
      </button>
      <div className="ml-auto flex w-[648px] items-center">
        <span className="h-full w-[6px] border border-[#8e949c] bg-white" />
        <button aria-label="Scroll left" className="px-1"><ArrowIcon dir="left" /></button>
        <div className="flex h-full flex-1">
          <div className="flex w-[85%] items-center justify-center gap-px border border-[#9da3ab] bg-linear-to-b from-[#f8f9fb] to-[#dfe4ec]">
            <span className="h-2 w-px bg-[#8e949c]" />
            <span className="h-2 w-px bg-[#8e949c]" />
            <span className="h-2 w-px bg-[#8e949c]" />
            <span className="h-2 w-px bg-[#8e949c]" />
          </div>
        </div>
        <button aria-label="Scroll right" className="pr-[5px]"><ArrowIcon dir="right" /></button>
        <span className="w-[15px]" />
      </div>
    </div>
  );
}

function StatusBar() {
  return (
    <footer className="flex h-[21px] shrink-0 items-center border-t border-[#9298a1] bg-linear-to-b from-[#e3e6ea] to-[#bdc1c7] pb-px text-[11px] text-[#45494f]">
      <span className="w-[41px] pl-[7px]">Ready</span>
      <Sep className="h-[18px] bg-[#8e949c]" />
      <button aria-label="Record macro" className="px-[3px]">
        <Svg>
          <rect x="1.5" y="2.5" width="13" height="11.5" fill="#eef4fd" stroke="#4a6db0" />
          <path d="M5 3.5h9.5" stroke="#4a6db0" strokeWidth="3" />
          <path d="M4 8h9M4 11h9" stroke="#a9c0e6" />
          <circle cx="3.5" cy="4" r="3" fill="#d93a2b" />
        </Svg>
      </button>
      <Sep className="h-[18px] bg-[#8e949c]" />
      <div className="ml-auto flex items-center pr-[3px]">
        <Sep className="h-[18px] bg-[#8e949c]" />
        <button aria-label="Normal view" className="flex h-[18px] w-[18px] items-center justify-center rounded-[2px] border border-[#b98f2d] bg-[#fddc6d]">
          <svg width="13" height="12" viewBox="0 0 13 12" fill="#fff" stroke="#555"><path d="M.5.5h12v11H.5zM.5 4h12M.5 8h12M4.5.5v11M8.5.5v11" /></svg>
        </button>
        <button aria-label="Page layout view" className="flex w-[18px] justify-center">
          <svg width="13" height="12" viewBox="0 0 13 12" fill="#c9cdd3" stroke="#555"><path d="M.5.5h12v11H.5z" /><path d="M3.5 2.5h6v7h-6z" fill="#fff" /></svg>
        </button>
        <button aria-label="Page break view" className="flex w-[18px] justify-center">
          <svg width="13" height="12" viewBox="0 0 13 12" fill="#fff" stroke="#555"><path d="M.5.5h12v11H.5zM4.5.5v7h4v-7M.5 7.5h4M8.5.5v7" /></svg>
        </button>
        <span className="w-[43px] pl-1 text-center">130%</span>
        <button aria-label="Zoom out" className="flex">
          <Svg><circle cx="8" cy="8" r="6.5" fill="#f1f3f5" stroke="#6c727b" /><path d="M4.5 8h7" stroke="#444" strokeWidth="1.6" /></Svg>
        </button>
        <input
          type="range"
          aria-label="Zoom"
          min="10"
          max="250"
          defaultValue="143"
          className="h-4 w-[95px] appearance-none bg-transparent [&::-webkit-slider-runnable-track]:h-px [&::-webkit-slider-runnable-track]:bg-[#787e87] [&::-webkit-slider-thumb]:-mt-[5px] [&::-webkit-slider-thumb]:h-[11px] [&::-webkit-slider-thumb]:w-2 [&::-webkit-slider-thumb]:appearance-none [&::-webkit-slider-thumb]:rounded-b-[4px] [&::-webkit-slider-thumb]:border [&::-webkit-slider-thumb]:border-[#666c75] [&::-webkit-slider-thumb]:bg-white"
        />
        <button aria-label="Zoom in" className="flex">
          <Svg><circle cx="8" cy="8" r="6.5" fill="#f1f3f5" stroke="#6c727b" /><path d="M4.5 8h7M8 4.5v7" stroke="#444" strokeWidth="1.6" /></Svg>
        </button>
      </div>
    </footer>
  );
}

export default function App() {
  const [tab, setTab] = useState('Home');

  return (
    <div className="flex h-screen flex-col overflow-hidden bg-[#dfe2e7] font-[Open_Sans,sans-serif]">
      <TitleBar />
      <TabStrip tab={tab} onTab={setTab} />
      <Ribbon />
      <FormulaBar />
      <main className="flex min-h-0 flex-1">
        <Sheet />
        <div className="flex w-[15px] shrink-0 flex-col items-center border-l border-[#b3b8c0] bg-[#dbdfe6]">
          <button aria-label="Scroll up" className="flex h-4 items-center"><ArrowIcon /></button>
          <div className="flex h-[68px] w-full flex-col items-center justify-center gap-[2px] border border-[#8e949c] bg-linear-to-r from-[#f8f9fb] to-[#d5dae3]">
            <span className="h-px w-[7px] bg-[#777d86]" />
            <span className="h-px w-[7px] bg-[#777d86]" />
            <span className="h-px w-[7px] bg-[#777d86]" />
          </div>
          <button aria-label="Scroll down" className="mt-auto flex h-4 items-center"><ArrowIcon dir="down" /></button>
        </div>
      </main>
      <BottomBar />
      <StatusBar />
    </div>
  );
}
